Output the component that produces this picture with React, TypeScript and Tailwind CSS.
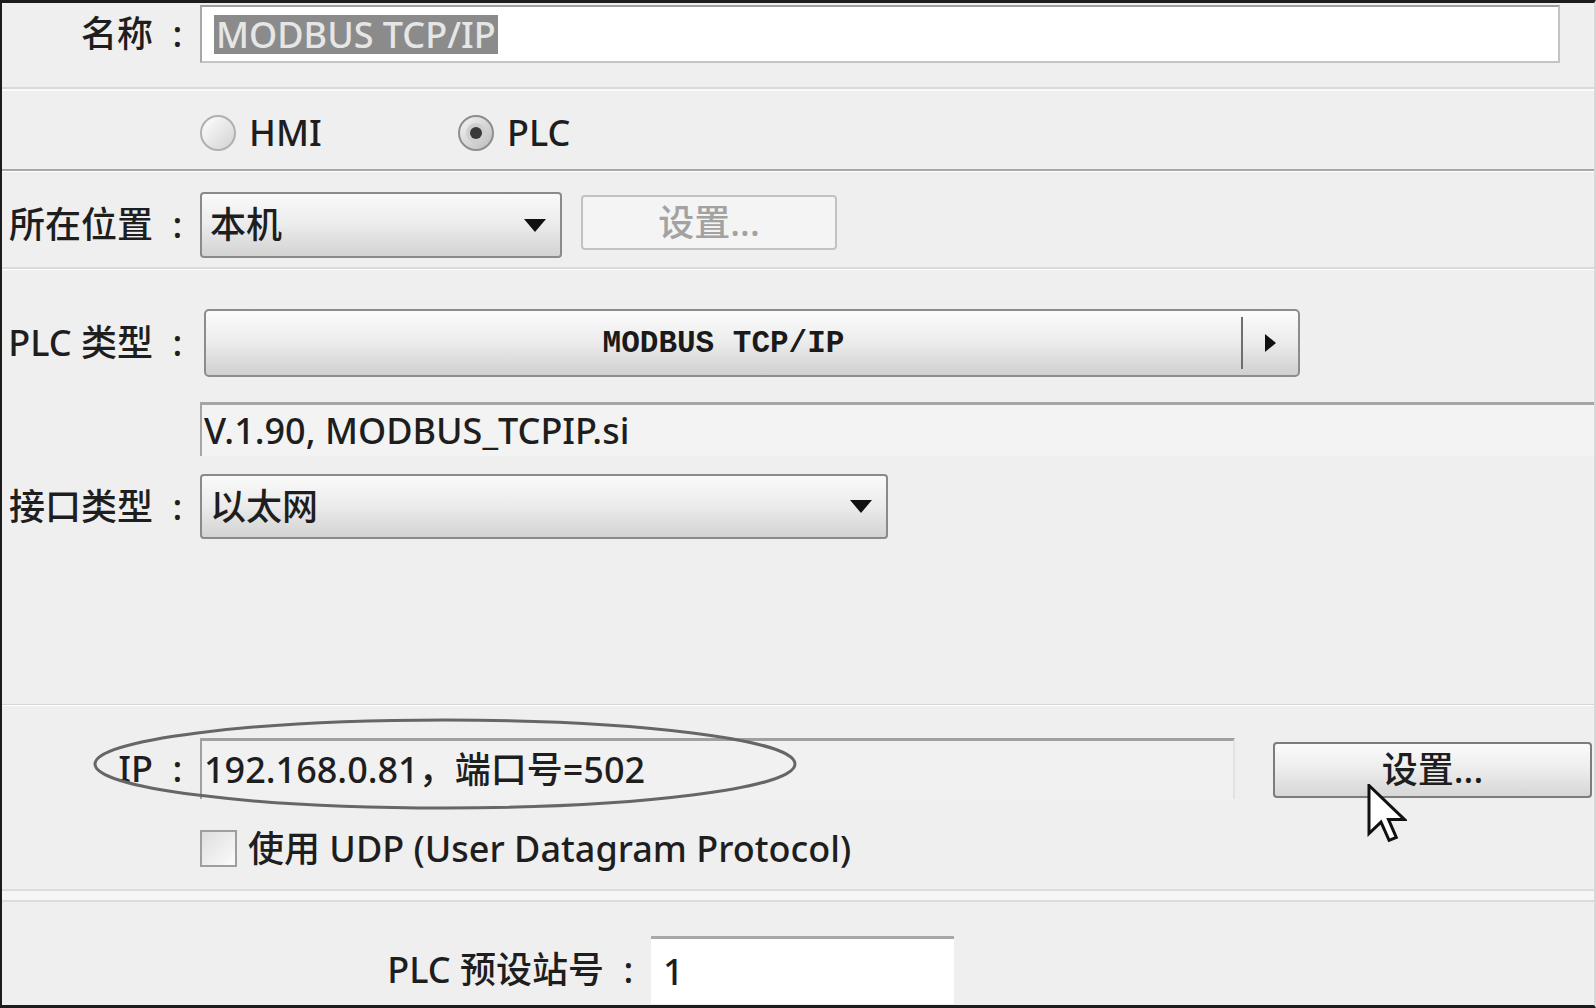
import React from "react";

// PLC 连接设置对话框（扫描件风格，灰度）

const Label = ({ text, className = "" }: { text: string; className?: string }) => (
  <div className={`flex w-[188px] shrink-0 items-center justify-end ${className}`}>
    <span>{text}</span>
    <span className="flex w-[37px] justify-center pl-[12px]">:</span>
  </div>
);

const DownArrow = () => (
  <svg width="22" height="13" viewBox="0 0 22 13">
    <path d="M0 0H22L11 13Z" fill="#111" />
  </svg>
);

const Cursor = () => (
  <svg width="40" height="60" viewBox="0 0 13 20">
    <path
      d="M0.5 0.5V16.5L4.5 12.7L7.2 18.8L9.6 17.8L7 11.8H12.3Z"
      fill="#fff"
      stroke="#111"
      strokeWidth="1"
      strokeLinejoin="miter"
    />
  </svg>
);

export default function App() {
  return (
    <div className="relative h-[1008px] w-[1596px] overflow-hidden border-y-[3px] border-l-[2px] border-r-[2px] border-[#1c1c1c] border-r-[#d8d8d8] bg-[#efefef] font-['Noto_Sans','Noto_Sans_CJK_SC',sans-serif] text-[36px] font-medium leading-none text-[#1e1e1e]">
      {/* 名称 */}
      <div className="flex h-[84px] items-start pt-[2px]">
        <Label text="名称" className="h-[58px]" />
        <div className="ml-[10px] flex h-[58px] w-[1360px] items-center border-2 border-[#c4c4c4] border-t-[#9e9e9e] border-l-[#a8a8a8] bg-white pl-[12px]">
          <span className="bg-[#8b8b8b] px-[2px] leading-[39px] text-[#e6e6e6]">MODBUS TCP/IP</span>
        </div>
      </div>
      <div className="h-[2px] bg-[#d9d9d9]" />
      <div className="h-[2px] bg-[#fafafa]" />

      {/* HMI / PLC */}
      <div className="flex h-[78px] items-center pl-[198px] pt-[6px]">
        <div className="flex w-[258px] items-center">
          <div className="h-[36px] w-[36px] rounded-full border-2 border-[#b0b0b0] bg-linear-to-br from-[#ffffff] to-[#d2d2d2]" />
          <span className="ml-[13px]">HMI</span>
        </div>
        <div className="flex items-center">
          <div className="flex h-[36px] w-[36px] items-center justify-center rounded-full border-2 border-[#8e8e8e] bg-linear-to-br from-[#f4f4f4] to-[#bdbdbd]">
            <div className="flex h-[20px] w-[20px] items-center justify-center rounded-full bg-[#cfcfcf]">
              <div className="h-[12px] w-[12px] rounded-full bg-[#3a3a3a]" />
            </div>
          </div>
          <span className="ml-[13px]">PLC</span>
        </div>
      </div>
      <div className="h-[2px] bg-[#a8a8a8]" />
      <div className="h-[1px] bg-white" />

      {/* 所在位置 */}
      <div className="flex h-[95px] items-start pt-[20px]">
        <Label text="所在位置" className="h-[66px]" />
        <div className="ml-[10px] flex h-[66px] w-[362px] items-center justify-between rounded-[4px] border-2 border-[#8a8a8a] bg-linear-to-b from-[#fafafa] via-[#ebebeb] to-[#d3d3d3] pl-[8px] pr-[14px]">
          <span>本机</span>
          <DownArrow />
        </div>
        <div className="ml-[19px] mt-[3px] flex h-[55px] w-[256px] items-center justify-center rounded-[4px] border-2 border-[#c2c2c2] bg-[#f4f4f4] text-[#a2a2a2]">
          设置...
        </div>
      </div>
      <div className="h-[2px] bg-[#dadada]" />
      <div className="h-[1px] bg-white" />

      {/* PLC 类型 */}
      <div className="flex h-[132px] items-start pt-[39px]">
        <Label text="PLC 类型" className="h-[68px]" />
        <div className="ml-[14px] flex h-[68px] w-[1096px] rounded-[5px] border-2 border-[#8c8c8c] bg-linear-to-b from-[#fbfbfb] via-[#ebebeb] to-[#d0d0d0]">
          <div className="flex flex-1 items-center justify-center font-['Liberation_Mono',monospace] text-[31px] font-bold text-[#1a1a1a]">
            MODBUS TCP/IP
          </div>
          <div className="my-[6px] w-[2px] bg-[#6e6e6e]" />
          <div className="flex w-[55px] items-center justify-center">
            <svg width="11" height="18" viewBox="0 0 11 18">
              <path d="M0 0L11 9L0 18Z" fill="#111" />
            </svg>
          </div>
        </div>
      </div>
      <div className="ml-[198px] flex h-[54px] items-center border-l-2 border-t-[3px] border-[#a5a5a5] bg-[#f3f3f3] pl-[2px]">
        V.1.90, MODBUS_TCPIP.si
      </div>

      {/* 接口类型 */}
      <div className="flex h-[248px] items-start pt-[18px]">
        <Label text="接口类型" className="h-[65px]" />
        <div className="ml-[10px] flex h-[65px] w-[688px] items-center justify-between rounded-[4px] border-2 border-[#8a8a8a] bg-linear-to-b from-[#fafafa] via-[#ebebeb] to-[#d3d3d3] pl-[8px] pr-[14px]">
          <span>以太网</span>
          <DownArrow />
        </div>
      </div>
      <div className="h-[1px] bg-[#d6d6d6]" />
      <div className="h-[1px] bg-white" />

      {/* IP */}
      <div className="flex h-[112px] items-start pt-[32px]">
        <Label text="IP" className="h-[61px]" />
        <div className="ml-[10px] flex h-[61px] w-[1035px] items-center border-l-2 border-r-2 border-t-[3px] border-[#a0a0a0] border-r-[#e2e2e2] bg-[#f1f1f1] pl-[2px]">
          192.168.0.81，端口号=502
        </div>
        <div className="ml-[38px] mt-[4px] flex h-[56px] w-[319px] items-center justify-center rounded-[4px] border-2 border-[#7c7c7c] bg-linear-to-b from-[#fbfbfb] via-[#ececec] to-[#d6d6d6]">
          设置...
        </div>
      </div>

      {/* UDP */}
      <div className="h-[71px] pl-[198px] pt-[12px]">
        <div className="flex h-[37px] items-center">
          <div className="h-[37px] w-[37px] border-2 border-[#9e9e9e] bg-linear-to-br from-[#dedede] to-[#fbfbfb]" />
          <span className="ml-[11px]">使用 UDP (User Datagram Protocol)</span>
        </div>
      </div>
      <div className="h-[2px] bg-[#dcdcdc]" />
      <div className="h-[9px] bg-[#f6f6f6]" />
      <div className="h-[2px] bg-[#dcdcdc]" />

      {/* PLC 预设站号 */}
      <div className="flex items-start pt-[34px]">
        <div className="flex h-[68px] w-[639px] shrink-0 items-center justify-end">
          <span>PLC 预设站号</span>
          <span className="flex w-[37px] justify-center pl-[12px]">:</span>
        </div>
        <div className="ml-[10px] flex h-[68px] w-[303px] items-center border-t-[3px] border-[#a8a8a8] bg-white pl-[12px]">
          1
        </div>
      </div>

      {/* 标注：椭圆与鼠标 */}
      <svg className="absolute left-[88px] top-[712px]" width="710" height="98" viewBox="0 0 710 98">
        <ellipse cx="355" cy="49" rx="350" ry="44" fill="none" stroke="#666" strokeWidth="3" />
      </svg>
      <div className="absolute left-[1365px] top-[781px]">
        <Cursor />
      </div>
    </div>
  );
}
